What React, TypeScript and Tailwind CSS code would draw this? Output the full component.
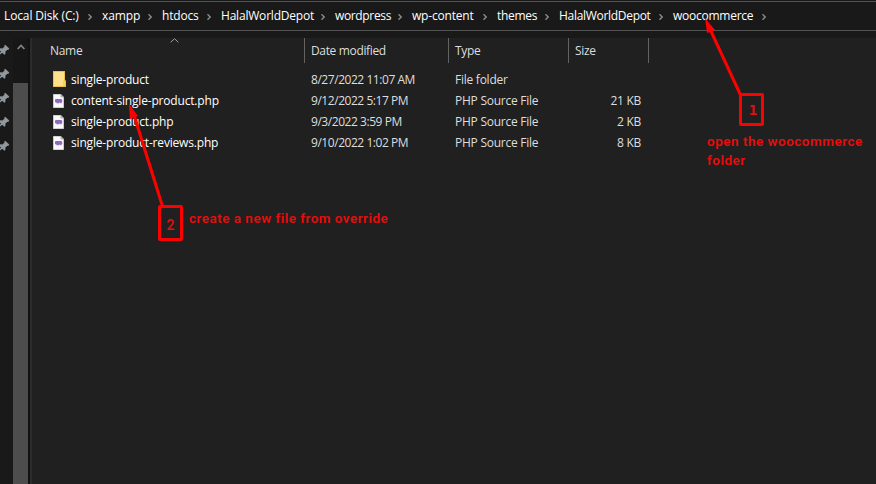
const crumbs = [
  { label: 'Local Disk (C:)', width: 'w-[98px]', track: 'tracking-[-0.13px]' },
  { label: 'xampp', width: 'w-[60px]', track: 'tracking-[-0.1px]' },
  { label: 'htdocs', width: 'w-[59px]', track: 'tracking-[-0.2px]' },
  { label: 'HalalWorldDepot', width: 'w-[114px]', track: 'tracking-[-0.2px]' },
  { label: 'wordpress', width: 'w-[77px]', track: 'tracking-[-0.35px]' },
  { label: 'wp-content', width: 'w-[85px]', track: 'tracking-[-0.2px]' },
  { label: 'themes', width: 'w-[62px]', track: 'tracking-[-0.3px]' },
  { label: 'HalalWorldDepot', width: 'w-[114px]', track: 'tracking-[-0.3px]' },
  { label: 'woocommerce', width: 'w-[103px]', track: 'tracking-[-0.25px]' },
];

const files = [
  { name: 'single-product', date: '8/27/2022 11:07 AM', type: 'File folder', size: '', folder: true },
  { name: 'content-single-product.php', date: '9/12/2022 5:17 PM', type: 'PHP Source File', size: '21 KB' },
  { name: 'single-product.php', date: '9/3/2022 3:59 PM', type: 'PHP Source File', size: '2 KB' },
  { name: 'single-product-reviews.php', date: '9/10/2022 1:02 PM', type: 'PHP Source File', size: '8 KB' },
];

function Pin() {
  return (
    <svg className="block h-[12px] w-[12px] shrink-0" viewBox="0 0 12 12">
      <path d="M7.2 0.8 L11.2 4.6 L10.2 5.9 L9.4 5.7 L7.4 7.6 L7.4 9.8 L6.4 10.8 L4.2 8.7 L1.2 11.3 L0.4 11.3 L0.4 10.5 L3 7.5 L1 5.4 L2 4.3 L4.4 4.5 L6.6 2.6 L6.2 1.7 Z" fill="#8f989e" />
    </svg>
  );
}

function FolderIcon() {
  return (
    <svg className="block h-[17px] w-[14px]" viewBox="0 0 14 17">
      <path d="M0 0 H12 V9.5 H13 V16 H0 Z" fill="#e8b93c" />
      <path d="M0.8 0.8 H11.2 V15.2 H0.8 Z" fill="#ffe08a" />
      <path d="M10.8 9.6 H12.4 V15.2 H10.8 Z" fill="#ffd968" stroke="#e8b93c" strokeWidth="0.6" />
    </svg>
  );
}

function PhpIcon() {
  return (
    <svg className="block h-[14px] w-[11px]" viewBox="0 0 11 14">
      <path d="M0 0 H8 L11 3 V14 H0 Z" fill="#a9a9ad" />
      <path d="M0.6 0.6 H7.6 V3.2 H10.4 V13.4 H0.6 Z" fill="#fafafc" />
      <path d="M7.8 0.5 L10.5 3.2 H7.8 Z" fill="#b4b4b9" />
      <path d="M2 5.5 L3 5 H8.2 L9.2 5.8 V8 H8.7 V9.3 H7.2 V8.5 H6.3 V9.3 H3.4 V8.2 H2 Z" fill="#9068bc" />
    </svg>
  );
}

export default function App() {
  return (
    <div className="relative flex h-[484px] w-[876px] flex-col overflow-hidden bg-[#191919] font-['Open_Sans','Noto_Sans',sans-serif] text-[12px] leading-[16px] text-white">
      <div className="mt-px flex h-[30px] shrink-0 items-center border-y border-[#535353] pl-[4px]">
        {crumbs.map((c, i) => (
          <div key={i} className={`flex shrink-0 items-center justify-between whitespace-nowrap ${c.width}`}>
            <span className={`font-medium ${c.track}`}>{c.label}</span>
            <svg className="mr-[10px] mt-px block h-[6px] w-[4px]" viewBox="0 0 4 6">
              <path d="M0.5 0.3 L3.2 3 L0.5 5.7" fill="none" stroke="#8c8c8c" strokeWidth="1.4" />
            </svg>
          </div>
        ))}
      </div>

      <div className="mt-[7px] flex min-h-0 flex-1">
        <aside className="flex w-[13px] shrink-0 flex-col gap-[12px] overflow-hidden pt-[6px]">
          {[0, 1, 2, 3, 4].map((n) => (
            <div key={n} className="-ml-[2px] w-[12px]"><Pin /></div>
          ))}
        </aside>
        <div className="flex w-[15px] shrink-0 flex-col bg-[#171717]">
          <div className="flex h-[45px] shrink-0 justify-center pt-[6px]">
            <svg className="block h-[6px] w-[8px]" viewBox="0 0 8 6">
              <path d="M0.6 5 L4 1.4 L7.4 5" fill="none" stroke="#858585" strokeWidth="1.6" />
            </svg>
          </div>
          <div className="flex-1 bg-[#4d4d4d]" />
        </div>
        <div className="w-[2px] shrink-0 bg-[#121212]" />
        <main className="flex-1 border-l-2 border-[#2b2b2b] bg-[#202020]">
          <div className="flex h-[25px] text-[#dedede]">
            <div className="relative w-[273px] border-r border-[#636363] pt-[5px] pl-[18px] tracking-[-0.3px]">
              Name
              <svg className="absolute top-0 left-[138px] h-[5px] w-[9px]" viewBox="0 0 9 5">
                <path d="M0.6 4.3 L4.5 0.7 L8.4 4.3" fill="none" stroke="#a0a0a0" />
              </svg>
            </div>
            <div className="w-[144px] border-r border-[#636363] pt-[5px] pl-[6px] tracking-[-0.35px]">Date modified</div>
            <div className="w-[120px] border-r border-[#636363] pt-[5px] pl-[6px] tracking-[-0.3px]">Type</div>
            <div className="w-[80px] border-r border-[#636363] pt-[5px] pl-[6px] tracking-[-0.3px]">Size</div>
          </div>
          <div className="pt-[6px]">
            {files.map((f) => (
              <div key={f.name} className="flex h-[21px] items-center whitespace-nowrap text-[#dedede]">
                <div className="flex w-[279px] items-center pl-[21px]">
                  <div className="w-[18px]">{f.folder ? <FolderIcon /> : <PhpIcon />}</div>
                  <span className="tracking-[-0.18px] text-white">{f.name}</span>
                </div>
                <div className="w-[144px] tracking-[-0.45px]">{f.date}</div>
                <div className="w-[120px] tracking-[-0.25px]">{f.type}</div>
                <div className="w-[66px] text-right tracking-[-0.3px]">{f.size}</div>
              </div>
            ))}
          </div>
        </main>
      </div>

      <svg className="pointer-events-none absolute inset-0 h-[484px] w-[876px]" viewBox="0 0 876 484">
        <g stroke="#ff0000" strokeWidth="3" fill="#ff0000">
          <path d="M741 96 L709 27" />
          <path d="M705 18 L715 30 L707 33 Z" stroke="none" />
          <path d="M163 208 L134 115" />
          <path d="M129 104 L138 116 L130 119 Z" stroke="none" />
        </g>
      </svg>
      <div className="absolute top-[93px] left-[739px] flex h-[33px] w-[25px] items-center justify-center rounded-[2px] border-3 border-[#ff0000] pt-px pl-[3px] font-['DejaVu_Sans_Mono',monospace] text-[14px] font-bold text-[#e01010]">1</div>
      <div className="absolute top-[205px] left-[158px] flex h-[36px] w-[25px] items-center justify-center rounded-[2px] border-3 border-[#ff0000] pt-[4px] font-['Roboto',sans-serif] text-[14px] font-medium text-[#e01010]">2</div>
      <div className="absolute top-[132px] left-[707px] font-['Roboto',sans-serif] text-[13.5px] leading-[19px] font-semibold tracking-[0.5px] whitespace-nowrap text-[#e80c0c]">
        open the woocommerce<br />folder
      </div>
      <div className="absolute top-[209px] left-[189px] font-['Roboto',sans-serif] text-[13.5px] leading-[19px] font-semibold tracking-[0.48px] whitespace-nowrap text-[#e80c0c]">
        create a new file from override
      </div>
    </div>
  );
}
